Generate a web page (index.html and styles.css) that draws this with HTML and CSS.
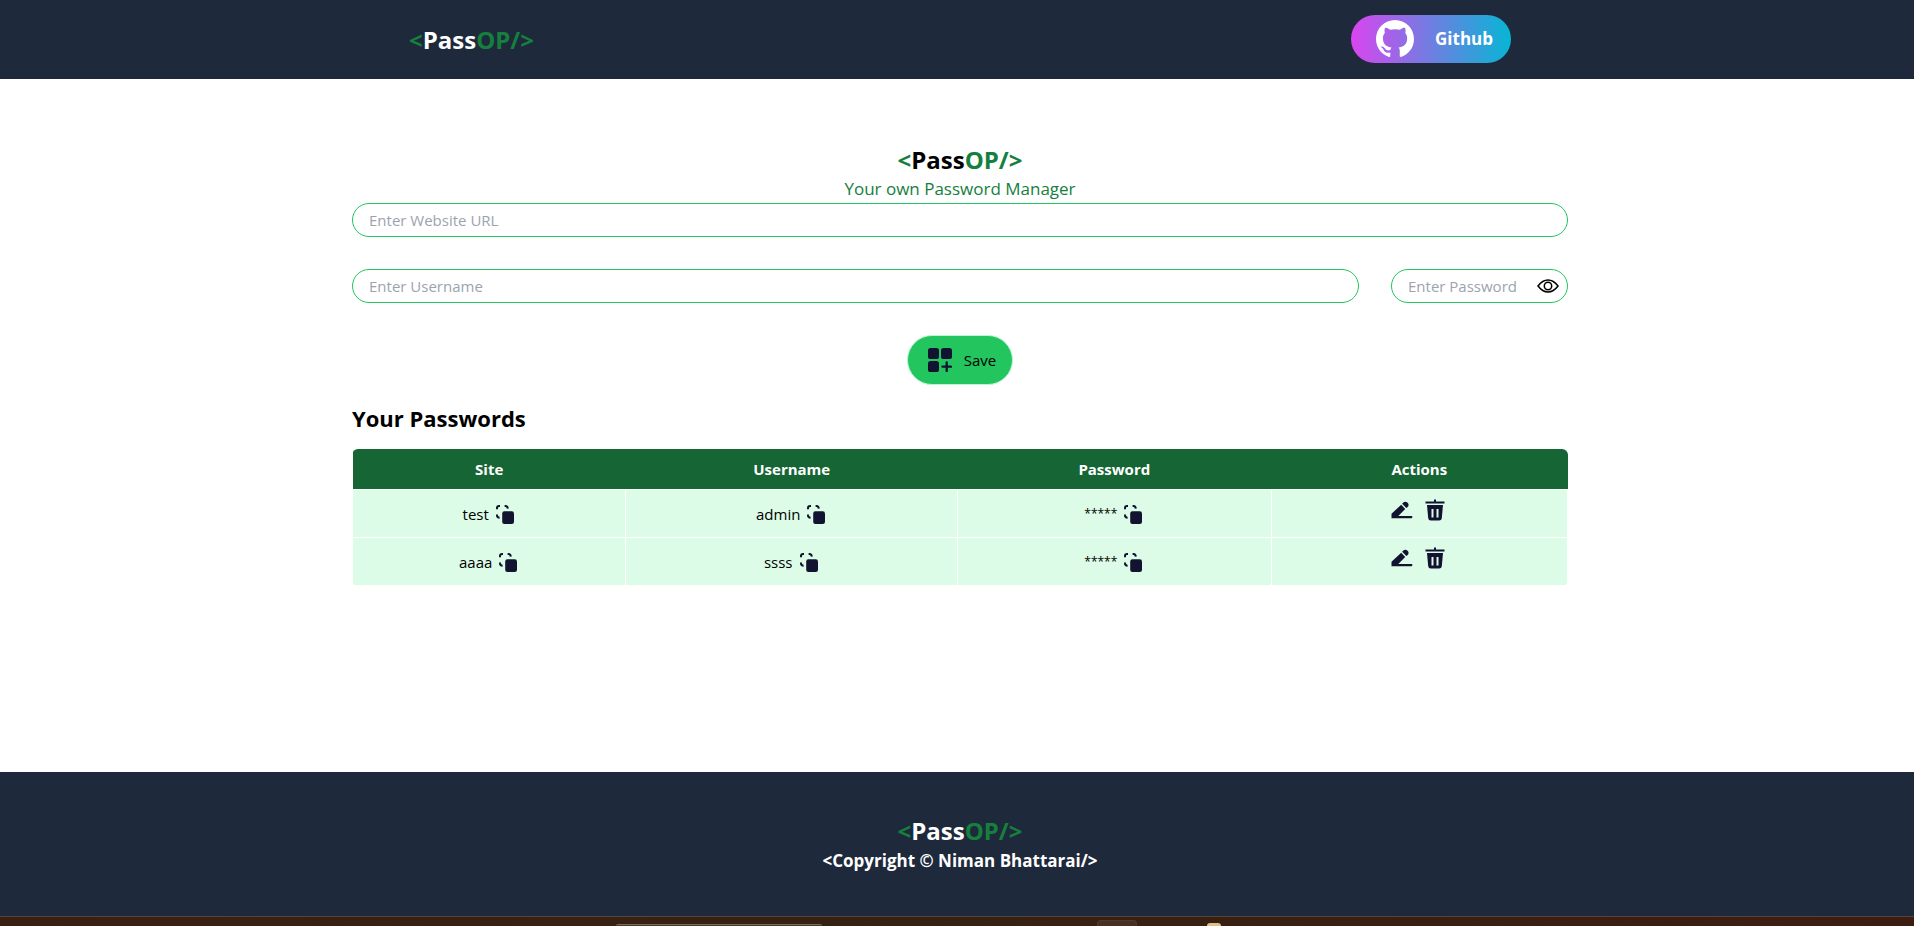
FILE: index.html
```html
<!DOCTYPE html>
<html lang="en">
<head>
<meta charset="utf-8">
<meta name="viewport" content="width=device-width, initial-scale=1">
<title>PassOP - Your own Password Manager</title>
<link rel="stylesheet" href="styles.css">
</head>
<body>
<svg class="sprite" aria-hidden="true">
  <symbol id="copy" viewBox="0 0 18 19">
    <path d="M1 4.200V3Q1 1 3 1h1M8.600 1h1Q11.600 1 11.800 3.600M1 9.600v1Q1 12.700 3.600 12.800" fill="none" stroke="#121331" stroke-width="2"/>
    <rect x="6.200" y="6.200" width="11.800" height="12.800" rx="2.200" fill="#121331"/>
  </symbol>
  <symbol id="edit" viewBox="0 0 22 22">
    <path d="M.5 19.200v-4.400L10.200 5.700l4 4.200L7.300 17.100H20.500q.9 0 .9 1t-.9 1.100z" fill="#121331"/>
    <path d="M11.200 4.700l1.100-1.100q2.200-1.800 4.300.1 1.900 2.200.1 4.300l-1.400 1.100z" fill="#121331"/>
  </symbol>
  <symbol id="trash" viewBox="0 0 20 22">
    <path d="M.5 3.500h19M10 .5v3" stroke="#121331" stroke-width="2"/>
    <path fill-rule="evenodd" d="M2 6h16l-1.200 13.200Q16.500 21.500 14.200 21.500H5.800Q3.500 21.500 3.200 19.200zM6.500 10v8.500h2V10zM11.500 10v8.500h2V10z" fill="#121331"/>
  </symbol>
</svg>

<header class="header">
  <div class="header-inner">
    <div class="logo"><span class="accent">&lt;</span>Pass<span class="accent">OP/&gt;</span></div>
    <button type="button" class="github">
      <svg width="38" height="38" viewBox="0 0 16 16" fill="#fff" aria-hidden="true"><path d="M8 0C3.580 0 0 3.580 0 8c0 3.540 2.290 6.530 5.470 7.590.4.070.55-.17.55-.38 0-.19-.01-.82-.01-1.490-2.010.37-2.530-.49-2.690-.94-.09-.23-.48-.94-.82-1.130-.28-.15-.68-.52-.01-.53.630-.01 1.080.58 1.230.82.72 1.210 1.870.87 2.330.66.07-.52.28-.87.51-1.070-1.780-.2-3.640-.89-3.640-3.950 0-.87.31-1.590.82-2.150-.08-.2-.36-1.020.08-2.120 0 0 .67-.21 2.200.82.64-.18 1.320-.27 2-.27s1.360.09 2 .27c1.530-1.040 2.200-.82 2.200-.82.44 1.100.16 1.920.08 2.120.51.56.82 1.270.82 2.150 0 3.070-1.870 3.750-3.650 3.950.29.25.54.73.54 1.480 0 1.070-.01 1.930-.01 2.200 0 .21.15.46.55.38A8.010 8.010 0 0 0 16 8c0-4.420-3.580-8-8-8"/></svg>
      <span>Github</span>
    </button>
  </div>
</header>

<main class="main">
  <div class="container">
    <h1 class="title"><span class="accent">&lt;</span>Pass<span class="accent">OP/&gt;</span></h1>
    <p class="tagline">Your own Password Manager</p>
    <form class="form">
      <input class="field" type="text" placeholder="Enter Website URL" aria-label="Website URL">
      <div class="form-row">
        <input class="field" type="text" placeholder="Enter Username" aria-label="Username">
        <div class="password">
          <input class="field" type="password" placeholder="Enter Password" aria-label="Password">
          <button type="button" class="eye" aria-label="Show password">
            <svg width="22" height="14" viewBox="0 0 22 14" fill="none" stroke="#000" stroke-width="1.500" aria-hidden="true"><path d="M1 7Q5.500 1 11 1t10 6q-4.500 6-10 6T1 7z"/><circle cx="11" cy="7" r="3.700"/></svg>
          </button>
        </div>
      </div>
      <button type="submit" class="save">
        <svg width="24" height="24" viewBox="0 0 24 24" fill="#121331" aria-hidden="true"><rect width="11" height="11" rx="2.600"/><rect x="13" width="11" height="11" rx="2.600"/><rect y="13" width="11" height="11" rx="2.600"/><path d="M18.700 14.500v8.500M14.500 18.700h8.500" stroke="#121331" stroke-width="2.300" stroke-linecap="round"/></svg>
        <span>Save</span>
      </button>
    </form>

    <h2 class="subtitle">Your Passwords</h2>
    <table class="table">
      <thead>
        <tr><th class="col-site">Site</th><th class="col-user">Username</th><th class="col-pass">Password</th><th>Actions</th></tr>
      </thead>
      <tbody>
        <tr>
          <td><div class="cell"><span>test</span><button type="button" class="icon" aria-label="Copy site"><svg width="18" height="19"><use href="#copy"/></svg></button></div></td>
          <td><div class="cell"><span>admin</span><button type="button" class="icon" aria-label="Copy username"><svg width="18" height="19"><use href="#copy"/></svg></button></div></td>
          <td><div class="cell"><span class="masked">*****</span><button type="button" class="icon" aria-label="Copy password"><svg width="18" height="19"><use href="#copy"/></svg></button></div></td>
          <td><div class="cell actions"><button type="button" class="icon" aria-label="Edit"><svg width="22" height="22"><use href="#edit"/></svg></button><button type="button" class="icon" aria-label="Delete"><svg width="20" height="22"><use href="#trash"/></svg></button></div></td>
        </tr>
        <tr>
          <td><div class="cell"><span>aaaa</span><button type="button" class="icon" aria-label="Copy site"><svg width="18" height="19"><use href="#copy"/></svg></button></div></td>
          <td><div class="cell"><span>ssss</span><button type="button" class="icon" aria-label="Copy username"><svg width="18" height="19"><use href="#copy"/></svg></button></div></td>
          <td><div class="cell"><span class="masked">*****</span><button type="button" class="icon" aria-label="Copy password"><svg width="18" height="19"><use href="#copy"/></svg></button></div></td>
          <td><div class="cell actions"><button type="button" class="icon" aria-label="Edit"><svg width="22" height="22"><use href="#edit"/></svg></button><button type="button" class="icon" aria-label="Delete"><svg width="20" height="22"><use href="#trash"/></svg></button></div></td>
        </tr>
      </tbody>
    </table>
  </div>
</main>

<footer class="footer">
  <div class="logo"><span class="accent">&lt;</span>Pass<span class="accent">OP/&gt;</span></div>
  <div class="copyright">&lt;Copyright © Niman Bhattarai/&gt;</div>
</footer>

<div class="taskbar">
  <div class="task-search"></div>
  <div class="task-app"></div>
  <div class="task-dot"></div>
</div>
</body>
</html>
```
FILE: styles.css
```css
*, *::before, *::after { box-sizing: border-box; }

body {
  margin: 0;
  min-height: 100vh;
  display: flex;
  flex-direction: column;
  overflow: hidden;
  background: #fff;
  color: #000;
  font: 15px/24px "Open Sans", "Noto Sans", sans-serif;
}

h1, h2, p { margin: 0; }
button, input { font: inherit; color: inherit; }
button { border: 0; padding: 0; background: none; cursor: pointer; }
svg { display: block; }

.sprite { position: absolute; width: 0; height: 0; }
.accent { color: #15803d; }

.header {
  padding-left: 6px;
  background: #1e293b;
  color: #fff;
}

.header-inner {
  max-width: 1102px;
  margin: 0 auto;
  padding: 15px 0 16px;
  display: flex;
  align-items: center;
  justify-content: space-between;
}

.logo, .title {
  font-size: 24px;
  line-height: 32px;
  font-weight: 700;
}

.header .logo { padding-top: 2px; }

.github {
  width: 160px;
  height: 48px;
  padding: 0 18px 0 25px;
  display: flex;
  align-items: center;
  justify-content: space-between;
  border-radius: 24px;
  background: linear-gradient(to right, #d946ef, #06b6d4);
  color: #fff;
  font-size: 17px;
  font-weight: 700;
}

.main {
  flex: 1;
  padding: 65px 0 0 6px;
}

.container {
  width: calc(100% - 64px);
  max-width: 1216px;
  margin: 0 auto;
}

.title, .tagline { text-align: center; }

.tagline {
  padding-bottom: 1px;
  font-size: 17px;
  line-height: 26px;
  color: #15803d;
}

.form {
  display: flex;
  flex-direction: column;
  align-items: center;
  gap: 32px;
}

.form-row {
  display: flex;
  gap: 32px;
  width: 100%;
}

.field {
  width: 100%;
  height: 34px;
  padding: 4px 16px;
  border: 1px solid #22c55e;
  border-radius: 17px;
  background: #fff;
}

.field::placeholder { color: #9ca3af; opacity: 1; }

.password {
  position: relative;
  flex: 0 0 177px;
}

.eye {
  position: absolute;
  right: 9px;
  top: 10px;
}

.save {
  height: 50px;
  padding: 0 16px 0 20px;
  display: flex;
  align-items: center;
  gap: 12px;
  border: 1px solid #bbf7d0;
  border-radius: 25px;
  background: #22c55e;
}

.subtitle {
  padding: 17px 0 15px;
  font-size: 22px;
  line-height: 32px;
  font-weight: 700;
}

.table {
  width: 100%;
  table-layout: fixed;
  border-collapse: collapse;
  border-radius: 6px;
  overflow: hidden;
  text-align: center;
}

.table th {
  height: 40px;
  padding: 0;
  background: #166534;
  color: #fff;
  font-weight: 700;
}

.table td {
  height: 48px;
  padding: 0;
  border: 1px solid #fff;
  background: #dcfce7;
}

.col-site { width: 22.5%; }
.col-user { width: 27.3%; }
.col-pass { width: 25.8%; }

.cell {
  display: flex;
  align-items: center;
  justify-content: center;
  gap: 7px;
  padding: 2px 2px 0 0;
}

.masked {
  font-size: 12px;
  line-height: 20px;
}

.actions {
  gap: 12px;
  padding: 0 2px 6px 0;
}

.footer {
  height: 144px;
  padding: 2px 0 0 6px;
  display: flex;
  flex-direction: column;
  align-items: center;
  justify-content: center;
  background: #1e293b;
  color: #fff;
}

.copyright {
  font-size: 17px;
  line-height: 28px;
  font-weight: 700;
}

.taskbar {
  height: 10px;
  padding-left: 616px;
  display: flex;
  align-items: flex-end;
  overflow: hidden;
  border-top: 1px solid #55423b;
  background: linear-gradient(to right, #3a2013, #352213 45%, #3d1d12);
}

.task-search {
  width: 206px;
  height: 2px;
  border-top: 1px solid #7c6a5c;
  border-radius: 12px 12px 0 0;
  background: #49382b;
}

.task-app {
  width: 40px;
  height: 6px;
  margin-left: 275px;
  border: 1px solid #503a2f;
  border-bottom: 0;
  border-radius: 4px 4px 0 0;
  background: #463024;
}

.task-dot {
  width: 14px;
  height: 3px;
  margin-left: 70px;
  border-radius: 7px 7px 0 0;
  background: #dfc08b;
}
```
